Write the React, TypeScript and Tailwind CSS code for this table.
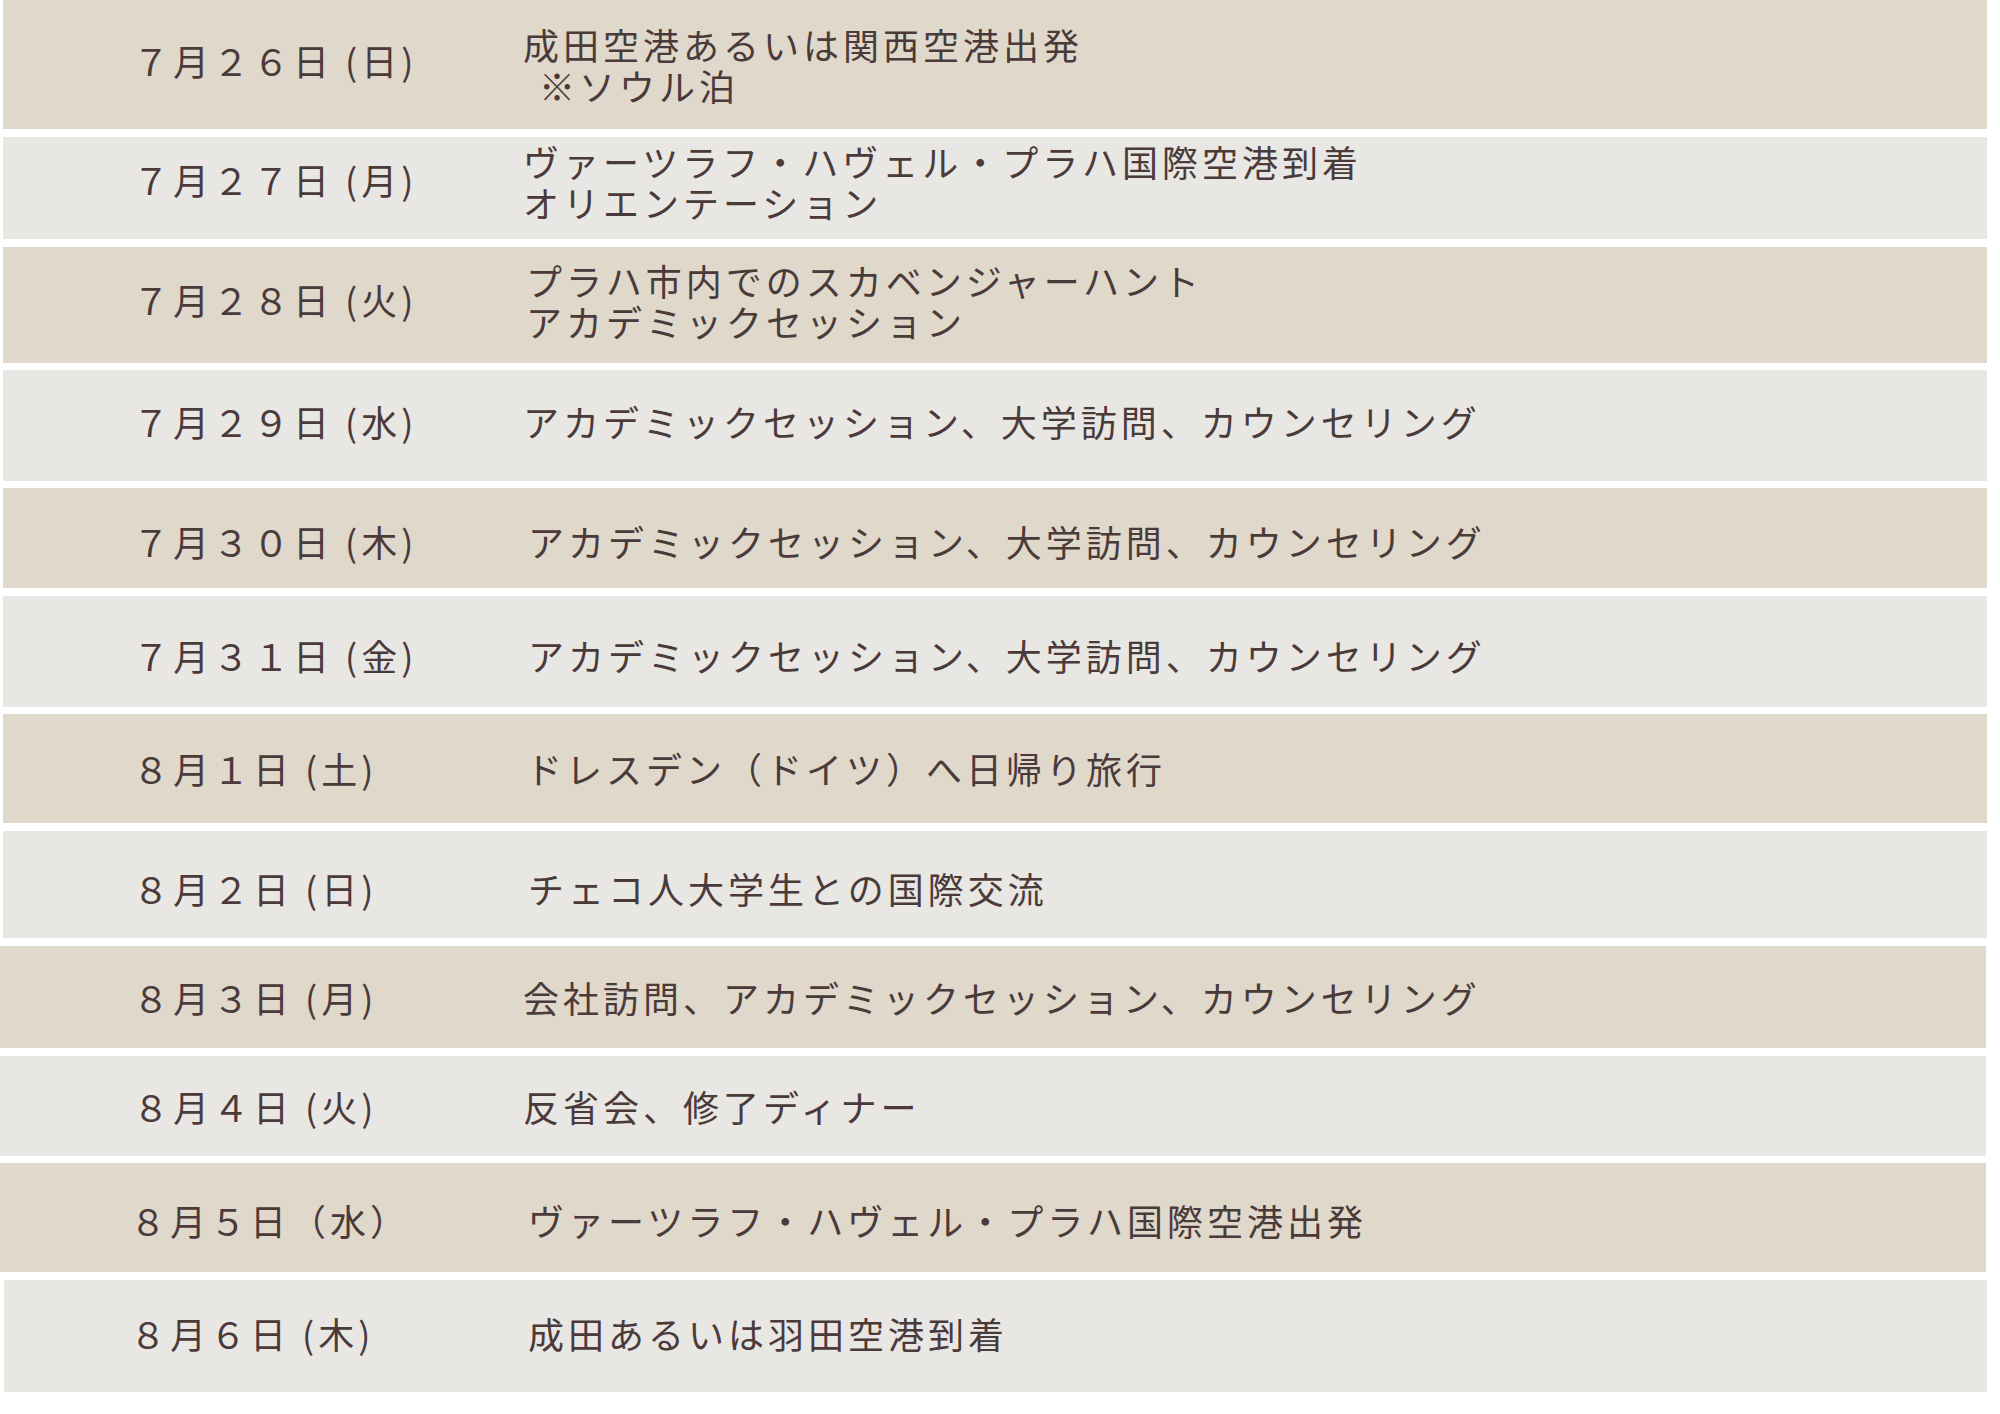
import React from "react";

type Row = {
  date: string;
  lines: string[];
  box: string;
  dateCls: string;
  act: string;
};

const BEIGE = "bg-[#dfd8cb]";
const GRAY = "bg-[#e8e7e3]";

const rows: Row[] = [
  { date: "７月２６日 (日)", lines: ["成田空港あるいは関西空港出発", "\u00a0※ソウル泊"], box: `${BEIGE} h-[129px] mt-0 ml-[3px] w-[1984px]`, dateCls: "pl-[130px] mb-[8px]", act: "pl-0" },
  { date: "７月２７日 (月)", lines: ["ヴァーツラフ・ハヴェル・プラハ国際空港到着", "オリエンテーション"], box: `${GRAY} h-[102px] mt-[8px] ml-[3px] w-[1984px] pb-[18px]`, dateCls: "pl-[130px]", act: "pl-0 mt-[6px]" },
  { date: "７月２８日 (火)", lines: ["プラハ市内でのスカベンジャーハント", "アカデミックセッション"], box: `${BEIGE} h-[116px] mt-[8px] ml-[3px] w-[1984px] pb-[8px]`, dateCls: "pl-[130px] mb-[4px]", act: "pl-[3px]" },
  { date: "７月２９日 (水)", lines: ["アカデミックセッション、大学訪問、カウンセリング"], box: `${GRAY} h-[111px] mt-[7px] ml-[3px] w-[1984px] pb-[8px]`, dateCls: "pl-[130px]", act: "pl-0" },
  { date: "７月３０日 (木)", lines: ["アカデミックセッション、大学訪問、カウンセリング"], box: `${BEIGE} h-[100px] mt-[7px] ml-[3px] w-[1984px] pt-[6px]`, dateCls: "pl-[130px]", act: "pl-[5px]" },
  { date: "７月３１日 (金)", lines: ["アカデミックセッション、大学訪問、カウンセリング"], box: `${GRAY} h-[111px] mt-[8px] ml-[3px] w-[1984px] pt-[8px]`, dateCls: "pl-[130px]", act: "pl-[5px]" },
  { date: "８月１日 (土)", lines: ["ドレスデン（ドイツ）へ日帰り旅行"], box: `${BEIGE} h-[109px] mt-[7px] ml-[3px] w-[1984px]`, dateCls: "pl-[130px]", act: "pl-[3px]" },
  { date: "８月２日 (日)", lines: ["チェコ人大学生との国際交流"], box: `${GRAY} h-[107px] mt-[8px] ml-[3px] w-[1984px] pt-[8px]`, dateCls: "pl-[130px]", act: "pl-[5px]" },
  { date: "８月３日 (月)", lines: ["会社訪問、アカデミックセッション、カウンセリング"], box: `${BEIGE} h-[102px] mt-[8px] ml-0 w-[1986px]`, dateCls: "pl-[133px]", act: "pl-[3px]" },
  { date: "８月４日 (火)", lines: ["反省会、修了ディナー"], box: `${GRAY} h-[100px] mt-[8px] ml-0 w-[1986px]`, dateCls: "pl-[133px]", act: "pl-[3px]" },
  { date: "８月５日（水）", lines: ["ヴァーツラフ・ハヴェル・プラハ国際空港出発"], box: `${BEIGE} h-[109px] mt-[7px] ml-0 w-[1986px] pt-[6px]`, dateCls: "pl-[130px]", act: "pl-[8px]" },
  { date: "８月６日 (木)", lines: ["成田あるいは羽田空港到着"], box: `${GRAY} h-[112px] mt-[8px] ml-[4px] w-[1983px] pb-[6px]`, dateCls: "pl-[126px]", act: "pl-[4px]" },
];

export default function App() {
  return (
    <div
      className="w-[2000px] h-[1414px] bg-white flex flex-col text-[#4b3a3a] text-[36px] leading-[41px] tracking-[4px] overflow-hidden"
      style={{ fontFamily: '"Noto Sans CJK JP", "Noto Sans", sans-serif' }}
    >
      {rows.map((r, i) => (
        <div key={i} className={`flex items-center shrink-0 ${r.box}`}>
          <div className={`w-[520px] shrink-0 whitespace-pre ${r.dateCls}`}>{r.date}</div>
          <div className={`flex flex-col ${r.act}`}>
            {r.lines.map((l, j) => (
              <div key={j} className={`whitespace-pre ${l.startsWith("\u00a0") ? "pl-[4px]" : ""}`}>
                {l}
              </div>
            ))}
          </div>
        </div>
      ))}
    </div>
  );
}
